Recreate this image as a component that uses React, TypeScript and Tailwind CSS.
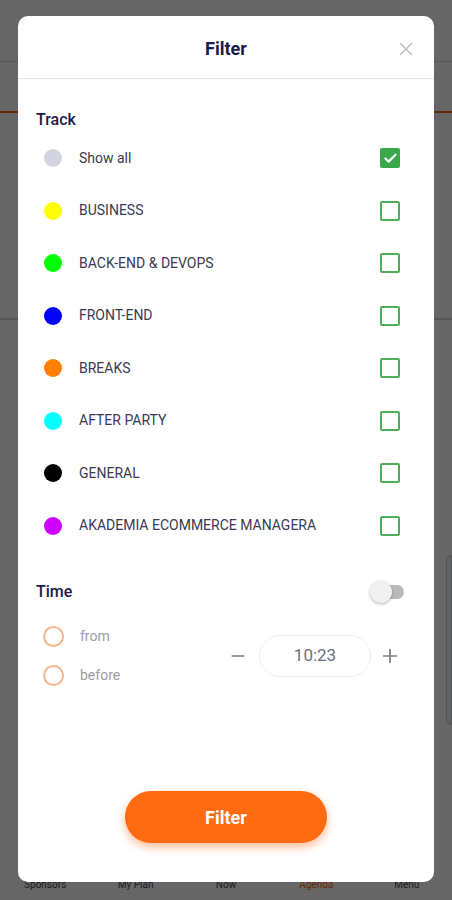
import { Check, X, Minus, Plus } from 'lucide-react';

const tracks = [
  { name: 'Show all', color: 'bg-[#d3d4de]', checked: true },
  { name: 'BUSINESS', color: 'bg-[#ffff00]' },
  { name: 'BACK-END & DEVOPS', color: 'bg-[#00ff00]' },
  { name: 'FRONT-END', color: 'bg-[#0000ff]' },
  { name: 'BREAKS', color: 'bg-[#ff7f00]' },
  { name: 'AFTER PARTY', color: 'bg-[#00ffff]' },
  { name: 'GENERAL', color: 'bg-[#000000]' },
  { name: 'AKADEMIA ECOMMERCE MANAGERA', color: 'bg-[#cc00ff]' },
];

const tabs = ['Sponsors', 'My Plan', 'Now', 'Agenda', 'Menu'];

export default function App() {
  return (
    <div className="relative h-[900px] w-[452px] overflow-hidden bg-white font-['Roboto',sans-serif]">
      {/* page underneath */}
      <div className="flex h-full flex-col">
        <div className="h-[62px] border-b border-gray-300" />
        <div className="h-[51px] border-b-2 border-[#ff6a13]" />
        <div className="h-[207px] border-b-2 border-gray-300" />
        <div className="flex flex-1 justify-end pt-[235px]">
          <div className="h-[170px] w-[6px] rounded-l-md border border-gray-300 bg-gray-100" />
        </div>
        <div className="grid h-[36px] grid-cols-5 items-end pb-[8px] text-center text-[10px] text-[#4a4a4a]">
          {tabs.map((t) => (
            <span key={t} className={t === 'Agenda' ? 'text-[#ff6a13]' : ''}>
              {t}
            </span>
          ))}
        </div>
      </div>

      {/* overlay + modal */}
      <div className="absolute inset-0 bg-black/60 px-[18px] pt-[16px] pb-[18px]">
        <div className="flex h-full flex-col rounded-[10px] bg-white">
          <div className="relative flex h-[63px] items-center justify-center border-b border-[#e6e6e6] pt-[3px]">
            <span className="text-[18px] font-bold text-[#1b1a4a]">Filter</span>
            <X className="absolute right-[17px] top-[22px] h-[22px] w-[22px] text-[#bdbdc5]" strokeWidth={1.6} />
          </div>

          <div className="flex flex-1 flex-col pt-[31px]">
            <div className="px-[18px] text-[16px] leading-[20px] font-medium text-[#1b1a4a]">Track</div>
            <div className="mt-[2px] flex flex-col">
              {tracks.map((t) => (
                <div key={t.name} className="flex h-[52.5px] items-center pl-[26px] pr-[34px]">
                  <span className={`h-[18px] w-[18px] rounded-full ${t.color}`} />
                  <span className="ml-[17px] flex-1 text-[14px] text-[#3a3a55]">{t.name}</span>
                  {t.checked ? (
                    <span className="flex h-[20px] w-[20px] items-center justify-center rounded-[2px] bg-[#38a84a]">
                      <Check className="h-[15px] w-[15px] text-white" strokeWidth={3.5} />
                    </span>
                  ) : (
                    <span className="h-[20px] w-[20px] rounded-[2px] border-2 border-[#4cae57]" />
                  )}
                </div>
              ))}
            </div>

            <div className="mt-[30px] flex h-[20px] items-center justify-between pl-[18px] pr-[30px]">
              <span className="text-[16px] font-medium text-[#1b1a4a]">Time</span>
              <div className="flex items-center">
                <span className="relative z-10 h-[22px] w-[22px] rounded-full bg-[#f1f1f1] shadow-[0_1px_3px_rgba(0,0,0,0.3)]" />
                <span className="-ml-[10px] h-[14px] w-[22px] rounded-r-full bg-[#b9b9b9]" />
              </div>
            </div>

            <div className="mt-[24px] flex items-center justify-between pl-[25px] pr-[33px]">
              <div className="flex flex-col gap-[18px]">
                <div className="flex items-center">
                  <span className="h-[21px] w-[21px] rounded-full border-2 border-[#f7b58a]" />
                  <span className="ml-[16px] text-[14px] text-[#9b9ba6]">from</span>
                </div>
                <div className="flex items-center">
                  <span className="h-[21px] w-[21px] rounded-full border-2 border-[#f7b58a]" />
                  <span className="ml-[16px] text-[14px] text-[#9b9ba6]">before</span>
                </div>
              </div>
              <div className="flex items-center">
                <Minus className="h-[20px] w-[20px] text-[#7a7a85]" strokeWidth={1.8} />
                <div className="ml-[11px] flex h-[42px] w-[112px] items-center justify-center rounded-full border border-[#f0f0f0] text-[17px] text-[#6f6f7a]">
                  10:23
                </div>
                <Plus className="ml-[8px] h-[22px] w-[22px] text-[#7a7a85]" strokeWidth={1.8} />
              </div>
            </div>

            <div className="mt-auto mb-[39px] flex justify-center">
              <button className="h-[52px] w-[202px] rounded-full bg-[#ff6a13] text-[18px] font-bold text-white shadow-[0_4px_10px_rgba(255,106,19,0.45)]">
                Filter
              </button>
            </div>
          </div>
        </div>
      </div>
    </div>
  );
}
